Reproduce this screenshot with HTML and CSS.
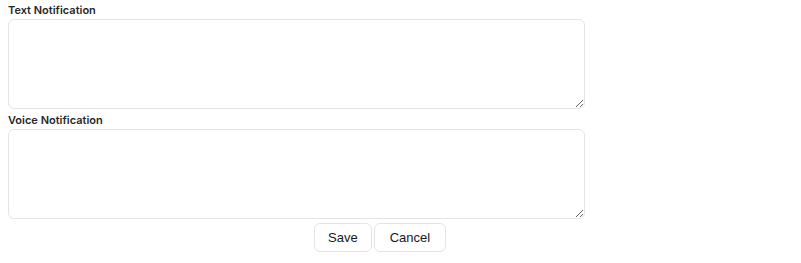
FILE: index.html
```html
<!DOCTYPE html>
<html lang="en">
<head>
    <meta charset="UTF-8">
    <title>Notifications</title>
    <link rel="stylesheet" href="styles.css">
</head>
<body>
    <form class="notify-form">
        <label class="field-label" for="text-note">Text Notification</label>
        <textarea id="text-note" class="field-input"></textarea>

        <label class="field-label" for="voice-note">Voice Notification</label>
        <textarea id="voice-note" class="field-input"></textarea>

        <div class="actions">
            <button type="button" class="btn">Save</button>
            <button type="button" class="btn btn-cancel">Cancel</button>
        </div>
    </form>
</body>
</html>
```

FILE: styles.css
```css
body {
    margin: 0;
    padding: 4px 8px;
    font-family: Inter, 'Noto Sans', sans-serif;
    color: #27272a;
    background: #fff;
}
.notify-form {
    width: 577px;
    display: flex;
    flex-direction: column;
}
.field-label {
    font-size: 11px;
    font-weight: 600;
    line-height: 13px;
    margin-bottom: 2px;
}
.field-input {
    box-sizing: border-box;
    width: 577px;
    height: 90px;
    margin: 0 0 5px 0;
    border: 1px solid #e4e4e7;
    border-radius: 6px;
    resize: vertical;
    padding: 6px 8px;
}
.actions {
    display: flex;
    gap: 2px;
    margin-left: 306px;
    margin-top: -1px;
}
.btn {
    font-family: 'Liberation Sans', Arial, sans-serif;
    font-size: 13px;
    color: #18181b;
    background: #fff;
    border: 1px solid #e4e4e7;
    border-radius: 6px;
    height: 29px;
    padding: 0 13px;
    cursor: pointer;
}
.btn-cancel {
    padding: 0 15px;
}
```
